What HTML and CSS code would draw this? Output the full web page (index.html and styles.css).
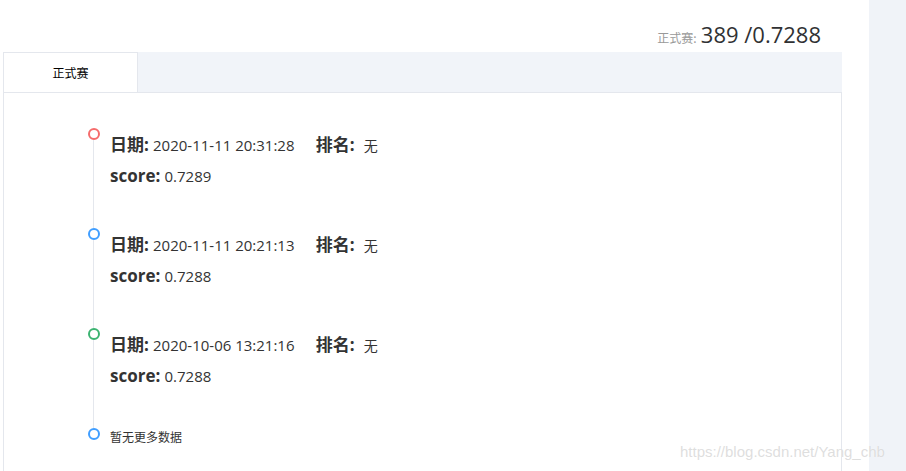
FILE: index.html
```html
<!DOCTYPE html>
<html lang="zh-CN">
<head>
    <meta charset="UTF-8">
    <meta name="viewport" content="width=device-width, initial-scale=1.0">
    <title>提交记录</title>
    <link rel="stylesheet" href="styles.css">
</head>
<body>
    <div class="page">
        <div class="main">
            <div class="summary">
                <span class="summary-label">正式赛:</span>
                <span class="summary-value">389 /0.7288</span>
            </div>

            <div class="panel">
                <div class="tabs">
                    <div class="tab active">正式赛</div>
                </div>

                <div class="panel-body">
                    <ul class="timeline">
                        <li class="timeline-item">
                            <span class="node node-red"></span>
                            <div class="row">
                                <b>日期:</b> <span class="val">2020-11-11 20:31:28</span>
                                <b class="rank">排名:</b> <span class="val cn">无</span>
                            </div>
                            <div class="row second">
                                <b>score:</b> <span class="val">0.7289</span>
                            </div>
                        </li>
                        <li class="timeline-item">
                            <span class="node node-blue"></span>
                            <div class="row">
                                <b>日期:</b> <span class="val">2020-11-11 20:21:13</span>
                                <b class="rank">排名:</b> <span class="val cn">无</span>
                            </div>
                            <div class="row second">
                                <b>score:</b> <span class="val">0.7288</span>
                            </div>
                        </li>
                        <li class="timeline-item">
                            <span class="node node-green"></span>
                            <div class="row">
                                <b>日期:</b> <span class="val">2020-10-06 13:21:16</span>
                                <b class="rank">排名:</b> <span class="val cn">无</span>
                            </div>
                            <div class="row second">
                                <b>score:</b> <span class="val">0.7288</span>
                            </div>
                        </li>
                        <li class="timeline-item last">
                            <span class="node node-blue"></span>
                            <div class="empty">暂无更多数据</div>
                        </li>
                    </ul>
                </div>
            </div>
        </div>
        <div class="side"></div>
    </div>
    <div class="watermark">https://blog.csdn.net/Yang_chb</div>
</body>
</html>
```

FILE: styles.css
```css
:root {
    --border-color: #e4e7ed;
    --tab-bg: #f1f4f9;
    --side-bg: #f0f3f8;
    --text-color: #303133;
    --muted: #999;
}

body {
    margin: 0;
    font-family: "Open Sans", "Noto Sans CJK SC", sans-serif;
    color: var(--text-color);
    background: #fff;
}

.page {
    display: flex;
    height: 471px;
    overflow: hidden;
}

.main {
    width: 869px;
    flex: none;
}

.side {
    flex: 1;
    background: var(--side-bg);
}

.summary {
    height: 52px;
    box-sizing: border-box;
    padding: 20px 48px 0 0;
    text-align: right;
    line-height: 28px;
}

.summary-label {
    font-family: "Noto Sans CJK SC", sans-serif;
    font-size: 12px;
    color: var(--muted);
}

.summary-value {
    font-size: 22px;
}

.panel {
    margin-left: 3px;
    width: 839px;
}

.tabs {
    display: flex;
    height: 40px;
    background: var(--tab-bg);
}

.tab {
    width: 133px;
    border: 1px solid var(--border-color);
    border-bottom: none;
    background: #fff;
    font-family: "Noto Sans CJK SC", sans-serif;
    font-size: 12px;
    color: #000;
    display: flex;
    align-items: center;
    justify-content: center;
}

.panel-body {
    border: 1px solid var(--border-color);
    height: 400px;
    box-sizing: border-box;
}

.timeline {
    list-style: none;
    margin: 0;
    padding: 35px 0 0 84px;
}

.timeline-item {
    position: relative;
    padding: 5px 0 40px 22px;
}

.timeline-item::before {
    content: "";
    position: absolute;
    left: 5px;
    top: 12px;
    bottom: 0;
    border-left: 1px solid var(--border-color);
}

.timeline-item.last::before {
    display: none;
}

.timeline-item.last {
    padding-top: 0;
}

.node {
    position: absolute;
    left: 0;
    top: 0;
    width: 8px;
    height: 8px;
    border-radius: 50%;
    border: 2px solid;
    background: #fff;
}

.node-red { border-color: #f56c6c; }
.node-blue { border-color: #409eff; }
.node-green { border-color: #3cb371; }

.row {
    height: 24px;
    line-height: 24px;
    white-space: nowrap;
}

.row.second {
    margin-top: 7px;
}

.row b {
    font-size: 17px;
    font-weight: 700;
    color: #333;
}

.row b.rank {
    margin-left: 17px;
}

.val {
    font-size: 15px;
    color: #333;
}

.val.cn {
    font-family: "Noto Sans CJK SC", sans-serif;
    font-size: 14px;
    margin-left: 5px;
}

.empty {
    font-family: "Noto Sans CJK SC", sans-serif;
    font-size: 12px;
    line-height: 18px;
    color: #333;
}

.watermark {
    position: absolute;
    left: 680px;
    top: 443px;
    font-family: "Liberation Sans", sans-serif;
    font-size: 15px;
    color: rgba(200, 200, 200, 0.6);
    text-shadow: 0 0 1px #fff;
}
```
